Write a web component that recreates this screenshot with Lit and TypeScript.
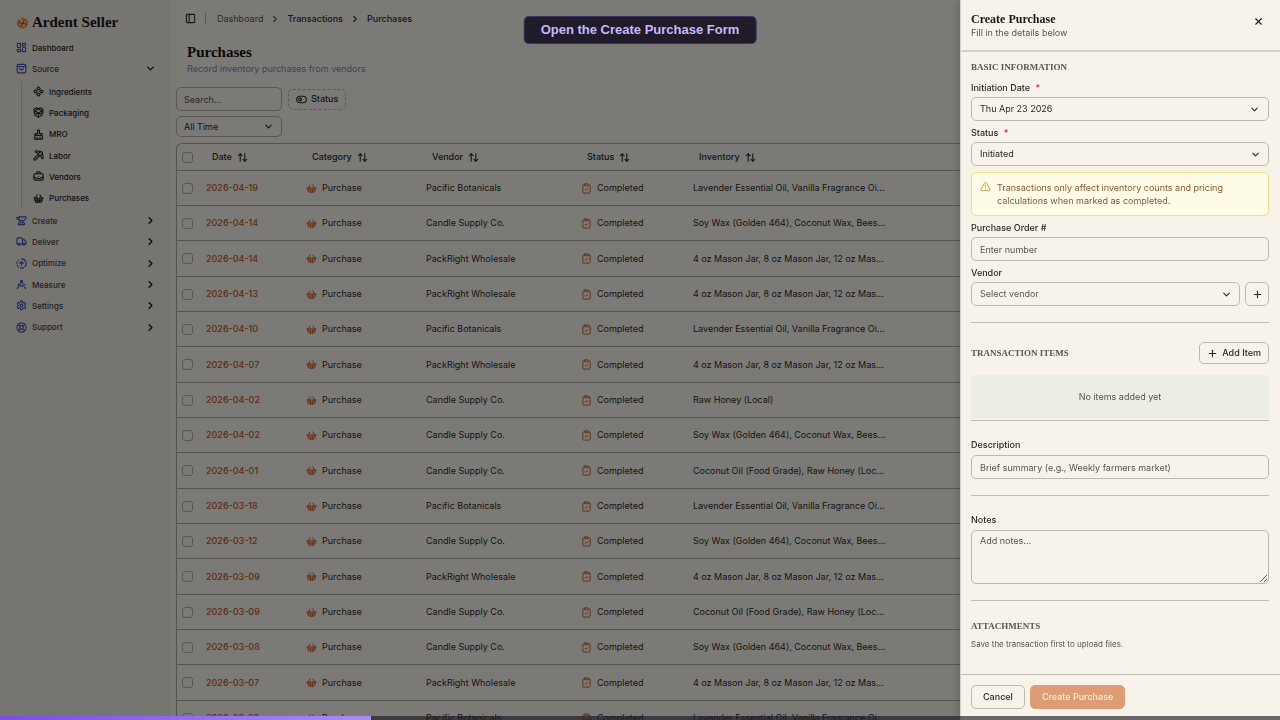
import { LitElement, html, css, svg } from "lit";
import { customElement } from "lit/decorators.js";

const p = (...ds: string[]) => ds.map((d) => svg`<path d=${d}></path>`);

const shapes: Record<string, unknown> = {
  dashboard: svg`<rect x="3" y="3" width="7" height="9" rx="1"/><rect x="14" y="3" width="7" height="5" rx="1"/><rect x="14" y="12" width="7" height="9" rx="1"/><rect x="3" y="16" width="7" height="5" rx="1"/>`,
  bag: svg`<rect x="2.500" y="3" width="19" height="18.500" rx="3"/><path d="M3 7.500h18M16 11a4 4 0 0 1-8 0"/>`,
  component: p(
    "M15.536 11.293a1 1 0 0 0 0 1.414l2.376 2.377a1 1 0 0 0 1.414 0l2.377-2.377a1 1 0 0 0 0-1.414l-2.377-2.377a1 1 0 0 0-1.414 0z",
    "M2.297 11.293a1 1 0 0 0 0 1.414l2.377 2.377a1 1 0 0 0 1.414 0l2.377-2.377a1 1 0 0 0 0-1.414L6.088 8.916a1 1 0 0 0-1.414 0z",
    "M8.916 17.912a1 1 0 0 0 0 1.415l2.377 2.376a1 1 0 0 0 1.414 0l2.377-2.376a1 1 0 0 0 0-1.415l-2.377-2.376a1 1 0 0 0-1.414 0z",
    "M8.916 4.674a1 1 0 0 0 0 1.414l2.377 2.376a1 1 0 0 0 1.414 0l2.377-2.376a1 1 0 0 0 0-1.414l-2.377-2.377a1 1 0 0 0-1.414 0z"
  ),
  box: p(
    "M12 22v-9",
    "M15.170 2.210a1.670 1.670 0 0 1 1.630 0L21 4.570a1.930 1.930 0 0 1 0 3.360L8.820 14.790a1.655 1.655 0 0 1-1.640 0L3 12.430a1.930 1.930 0 0 1 0-3.360z",
    "M20 13v3.870a2.060 2.060 0 0 1-1.110 1.830l-6 3.080a1.930 1.930 0 0 1-1.780 0l-6-3.080A2.060 2.060 0 0 1 4 16.870V13",
    "M21 12.430a1.930 1.930 0 0 0 0-3.360L8.830 2.200a1.640 1.640 0 0 0-1.630 0L3 4.570a1.930 1.930 0 0 0 0 3.360l12.180 6.860a1.636 1.636 0 0 0 1.630 0z"
  ),
  brush: p(
    "m16 22-1-4",
    "M19 14a1 1 0 0 0 1-1v-1a2 2 0 0 0-2-2h-3a1 1 0 0 1-1-1V4a2 2 0 0 0-4 0v5a1 1 0 0 1-1 1H6a2 2 0 0 0-2 2v1a1 1 0 0 0 1 1",
    "M19 14H5l-1.973 6.767A1 1 0 0 0 4 22h16a1 1 0 0 0 .973-1.233z",
    "m8 22 1-4"
  ),
  pickaxe: p(
    "m14 13-8.381 8.380a1 1 0 0 1-3.001-3L11 9.999",
    "M15.973 4.027A13 13 0 0 0 5.902 2.373c-1.398.342-1.092 2.158.277 2.601a19.900 19.900 0 0 1 5.822 3.024",
    "M16.001 11.999a19.900 19.900 0 0 1 3.024 5.824c.444 1.369 2.260 1.676 2.603.278A13 13 0 0 0 20 8.069",
    "M18.352 3.352a1.205 1.205 0 0 0-1.704 0l-5.296 5.296a1.205 1.205 0 0 0 0 1.704l2.296 2.296a1.205 1.205 0 0 0 1.704 0l5.296-5.296a1.205 1.205 0 0 0 0-1.704z"
  ),
  briefcase: svg`<path d="M12 12h.01M16 6V4a2 2 0 0 0-2-2h-4a2 2 0 0 0-2 2v2M22 13a18.150 18.150 0 0 1-20 0"/><rect x="2" y="6" width="20" height="14" rx="2"/>`,
  basket: p(
    "m15 11-1 9", "m19 11-4-7", "M2 11h20",
    "m3.500 11 1.600 7.400a2 2 0 0 0 2 1.600h9.800a2 2 0 0 0 2-1.600l1.700-7.400",
    "M4.500 15.500h15", "m5 11 4-7", "m9 11 1 9"
  ),
  anvil: p(
    "M7 10H6a4 4 0 0 1-4-4 1 1 0 0 1 1-1h4",
    "M7 5a1 1 0 0 1 1-1h13a1 1 0 0 1 1 1 7 7 0 0 1-7 7H8a1 1 0 0 1-1-1z",
    "M9 12v5", "M15 12v5",
    "M5 20a3 3 0 0 1 3-3h8a3 3 0 0 1 3 3 1 1 0 0 1-1 1H6a1 1 0 0 1-1-1"
  ),
  truck: svg`<path d="M14 18V6a2 2 0 0 0-2-2H4a2 2 0 0 0-2 2v11a1 1 0 0 0 1 1h2M15 18H9M19 18h2a1 1 0 0 0 1-1v-3.650a1 1 0 0 0-.220-.624l-3.480-4.350A1 1 0 0 0 17.520 8H14"/><circle cx="17" cy="18" r="2"/><circle cx="7" cy="18" r="2"/>`,
  optimize: p(
    "M12 2a10 10 0 0 1 7.380 16.750", "m16 12-4-4-4 4", "M12 16V8",
    "M2.500 8.875a10 10 0 0 0-.500 3", "M2.830 16a10 10 0 0 0 2.430 3.400",
    "M4.636 5.235a10 10 0 0 1 .891-.857", "M8.644 21.420a10 10 0 0 0 7.631-.380"
  ),
  compass: svg`<circle cx="12" cy="5" r="2"/><path d="m12.990 6.740 1.930 3.440M19.136 12a10 10 0 0 1-14.271 0M21 21l-2.160-3.840M3 21l8.020-14.260"/>`,
  gear: svg`<path d="M9.671 4.136a2.340 2.340 0 0 1 4.659 0 2.340 2.340 0 0 0 3.319 1.915 2.340 2.340 0 0 1 2.330 4.033 2.340 2.340 0 0 0 0 3.831 2.340 2.340 0 0 1-2.330 4.033 2.340 2.340 0 0 0-3.319 1.915 2.340 2.340 0 0 1-4.659 0 2.340 2.340 0 0 0-3.320-1.915 2.340 2.340 0 0 1-2.330-4.033 2.340 2.340 0 0 0 0-3.831A2.340 2.340 0 0 1 6.350 6.051a2.340 2.340 0 0 0 3.319-1.915"/><circle cx="12" cy="12" r="3"/>`,
  buoy: svg`<circle cx="12" cy="12" r="10"/><circle cx="12" cy="12" r="4"/><path d="m4.930 4.930 4.240 4.240M14.830 9.170l4.240-4.240M14.830 14.830l4.240 4.240M9.170 14.830l-4.240 4.240"/>`,
  down: p("m6 9 6 6 6-6"),
  right: p("m9 18 6-6-6-6"),
  panel: svg`<rect x="3" y="3" width="18" height="18" rx="2"/><path d="M9 3v18"/>`,
  pill: svg`<rect x="1.500" y="5" width="21" height="14" rx="7"/><circle cx="9" cy="12" r="3"/>`,
  sort: p("m3 8 4-4 4 4", "M7 4v16", "m13 16 4 4 4-4", "M17 20V4"),
  clipboard: svg`<rect x="8" y="2" width="8" height="4" rx="1"/><path d="M16 4h2a2 2 0 0 1 2 2v14a2 2 0 0 1-2 2H6a2 2 0 0 1-2-2V6a2 2 0 0 1 2-2h2M9 14l2 2 4-4"/>`,
  close: p("M18 6 6 18", "m6 6 12 12"),
  plus: p("M5 12h14", "M12 5v14"),
  warning: p("m21.730 18-8-14a2 2 0 0 0-3.480 0l-8 14A2 2 0 0 0 4 21h16a2 2 0 0 0 1.730-3", "M12 9v4", "M12 17h.01"),
};

const icon = (name: string, kind = "") =>
  html`<svg class="icon ${kind}" viewBox="0 0 24 24" aria-hidden="true">${shapes[name]}</svg>`;

const subItems = [
  ["component", "Ingredients"], ["box", "Packaging"], ["brush", "MRO"],
  ["pickaxe", "Labor"], ["briefcase", "Vendors"], ["basket", "Purchases"],
];
const groups = [
  ["anvil", "Create"], ["truck", "Deliver"], ["optimize", "Optimize"],
  ["compass", "Measure"], ["gear", "Settings"], ["buoy", "Support"],
];

const PB = "Pacific Botanicals";
const CS = "Candle Supply Co.";
const PW = "PackRight Wholesale";
const OILS = "Lavender Essential Oil, Vanilla Fragrance Oi...";
const WAX = "Soy Wax (Golden 464), Coconut Wax, Bees...";
const JARS = "4 oz Mason Jar, 8 oz Mason Jar, 12 oz Mas...";
const FOOD = "Coconut Oil (Food Grade), Raw Honey (Loc...";
const rows = [
  ["2026-04-19", PB, OILS], ["2026-04-14", CS, WAX], ["2026-04-14", PW, JARS],
  ["2026-04-13", PW, JARS], ["2026-04-10", PB, OILS], ["2026-04-07", PW, JARS],
  ["2026-04-02", CS, "Raw Honey (Local)"], ["2026-04-02", CS, WAX], ["2026-04-01", CS, FOOD],
  ["2026-03-18", PB, OILS], ["2026-03-12", CS, WAX], ["2026-03-09", PW, JARS],
  ["2026-03-09", CS, FOOD], ["2026-03-08", CS, WAX], ["2026-03-07", PW, JARS],
  ["2026-02-28", PB, OILS],
];

const base = css`
  *, *::before, *::after { box-sizing: border-box; }
  h1, h2, h3, p, ul, ol { margin: 0; padding: 0; list-style: none; }
  a { color: inherit; text-decoration: none; }
  button, input, select, textarea { font: inherit; color: inherit; margin: 0; background: none; }
  button { border: 0; padding: 0; }
  .icon {
    width: 11px; height: 11px; flex: none; display: block;
    fill: none; stroke: currentColor; stroke-width: 2.4;
    stroke-linecap: round; stroke-linejoin: round;
  }
  .serif { font-family: "Liberation Serif", serif; font-weight: 700; }
`;

@customElement("side-nav")
class SideNav extends LitElement {
  static styles = [base, css`
    :host { display: block; padding: 14px 14px 0 16px; font-size: 8px; color: #48443e; }
    .brand { display: flex; align-items: center; gap: 3px; height: 16px; margin-bottom: 7px; font-size: 15px; color: #1c1814; }
    .flame { width: 13px; height: 13px; }
    .link { display: flex; align-items: center; gap: 5px; width: 100%; height: 21px; text-align: left; font-weight: 500; }
    .current { color: #26221e; }
    .link > .icon:first-child { color: #3c50b4; }
    .link > span { flex: 1; }
    .chevron { color: #1c1814; stroke-width: 3; }
    .sub { display: grid; grid-auto-rows: 1fr; height: 128px; margin: 2px 0 1px 5px; padding-left: 11px; border-left: 1px solid #c9c4ba; color: #26221e; }
    .sub .link, .groups .link { height: 100%; }
    .sub .link > .icon:first-child { color: #26221e; }
    .groups { display: grid; grid-auto-rows: 1fr; height: 128px; }
  `];
  render() {
    return html`
      <div class="brand serif">
        <svg class="flame" viewBox="0 0 24 24" aria-hidden="true">
          <path fill="#f08a48" d="M12 1c2 3 2 4 4 5 1-1 1-2 1-3 4 4 6 8 5 12-1 5-5 8-10 8S3 20 2 15c-1-4 1-7 4-10 0 2 0 3 1 4 2-2 4-4 5-8z"/>
          <path fill="#ffdca0" d="M6 12l6-5 6 4-1 8-8 1z"/>
          <path fill="none" stroke="#c84a20" stroke-width="2" d="M5 10l6 5 4-7M9 19l5-6 5 3"/>
        </svg>
        <span>Ardent Seller</span>
      </div>
      <nav>
        <a class="link current" href="#dashboard">${icon("dashboard")}<span>Dashboard</span></a>
        <button class="link" aria-expanded="true">${icon("bag")}<span>Source</span>${icon("down", "chevron")}</button>
        <ul class="sub">
          ${subItems.map(([i, t]) => html`<li><a class="link" href="#${t}">${icon(i)}<span>${t}</span></a></li>`)}
        </ul>
        <ul class="groups">
          ${groups.map(([i, t]) => html`<li><button class="link">${icon(i)}<span>${t}</span>${icon("right", "chevron")}</button></li>`)}
        </ul>
      </nav>`;
  }
}

@customElement("purchase-list")
class PurchaseList extends LitElement {
  static styles = [base, css`
    :host { display: block; padding: 6px 6px 0; color: #2e2a26; }
    .crumbs { display: flex; align-items: center; gap: 8px; height: 25px; padding-left: 9px; }
    .toggle { padding-right: 9px; border-right: 1px solid #b8b3a9; margin-right: 3px; }
    .crumbs ol { display: flex; align-items: center; gap: 7px; }
    .crumbs li { display: flex; align-items: center; gap: 7px; font-weight: 500; }
    .crumbs li:first-child { color: #5a554e; font-weight: 400; }
    .crumbs li .icon { stroke-width: 2.6; width: 10px; height: 10px; }
    .heading { padding: 12px 11px 10px; }
    h1 { font-size: 15px; line-height: 18px; color: #14100c; }
    .heading p { line-height: 16px; color: #7486bc; }
    .filters { display: grid; grid-template-columns: 106px max-content; gap: 5px; align-items: center; margin-bottom: 6px; }
    .search, .range select { width: 100%; border: 1px solid #b4afa5; border-radius: 5px; padding: 0 7px; }
    .search { height: 24px; outline: 0; }
    .search::placeholder { color: #5a554e; opacity: 1; }
    .range { display: grid; align-items: center; }
    .range > * { grid-area: 1 / 1; }
    .range select { height: 21px; appearance: none; }
    .range .icon { justify-self: end; margin-right: 8px; pointer-events: none; }
    .status { display: flex; align-items: center; gap: 4px; height: 21px; margin-left: 1px; padding: 0 7px; border: 1px dashed #bcb7ad; border-radius: 5px; font-weight: 500; }
    .frame { border: 1px solid #aaa59b; border-bottom: 0; border-radius: 6px 6px 0 0; }
    table { width: 100%; table-layout: fixed; border-collapse: separate; border-spacing: 0; }
    th, td { padding: 0 6px; text-align: left; border-bottom: 1px solid #aaa59b; white-space: nowrap; overflow: hidden; }
    th { height: 27px; font-weight: 500; }
    td { height: 35px; }
    tbody tr:nth-child(3n) td { height: 36px; }
    .pick { width: 23px; padding: 0 5px; }
    .date { width: 100px; }
    .category { width: 120px; }
    .vendor { width: 155px; }
    .state { width: 112px; }
    .sort { display: flex; align-items: center; gap: 5px; padding-left: 6px; }
    td a { color: #c05420; font-weight: 500; }
    .cell { display: flex; align-items: center; gap: 5px; }
    .cell .icon { color: #c05420; stroke-width: 2; }
    .tick { appearance: none; display: block; width: 11px; height: 11px; border: 1px solid #b4afa5; border-radius: 3px; }
  `];
  render() {
    const head = (cls: string, t: string) =>
      html`<th class=${cls}><button class="sort">${t}${icon("sort")}</button></th>`;
    return html`
      <nav class="crumbs" aria-label="Breadcrumb">
        <button class="toggle" aria-label="Toggle sidebar">${icon("panel")}</button>
        <ol>
          <li><a href="#dashboard">Dashboard</a>${icon("right")}</li>
          <li><a href="#transactions">Transactions</a>${icon("right")}</li>
          <li>Purchases</li>
        </ol>
      </nav>
      <header class="heading">
        <h1 class="serif">Purchases</h1>
        <p>Record inventory purchases from vendors</p>
      </header>
      <div class="filters">
        <input class="search" type="search" placeholder="Search..." aria-label="Search" />
        <button class="status">${icon("pill")}Status</button>
        <div class="range">
          <select aria-label="Time range"><option>All Time</option></select>${icon("down")}
        </div>
      </div>
      <div class="frame">
        <table>
          <thead>
            <tr>
              <th class="pick"><input class="tick" type="checkbox" aria-label="Select all" /></th>
              ${head("date", "Date")}${head("category", "Category")}${head("vendor", "Vendor")}
              ${head("state", "Status")}${head("", "Inventory")}
            </tr>
          </thead>
          <tbody>
            ${rows.map(([date, vendor, items]) => html`<tr>
              <td class="pick"><input class="tick" type="checkbox" aria-label="Select ${date}" /></td>
              <td><a href="#${date}">${date}</a></td>
              <td><span class="cell">${icon("basket")}Purchase</span></td>
              <td>${vendor}</td>
              <td><span class="cell">${icon("clipboard")}Completed</span></td>
              <td>${items}</td>
            </tr>`)}
          </tbody>
        </table>
      </div>`;
  }
}

@customElement("purchase-form")
class PurchaseForm extends LitElement {
  static styles = [base, css`
    :host { display: flex; flex-direction: column; background: #f7f2ea; color: #2c2824; border-left: 1px solid #d5d1c8; }
    header { display: flex; justify-content: space-between; align-items: flex-start; padding: 12px 16px 10px 10px; border-bottom: 2px solid #d5d1c8; }
    h2 { font-size: 12px; line-height: 14px; color: #1c1814; }
    header p { line-height: 14px; color: #5a554e; }
    .close { padding-top: 4px; color: #1c1814; }
    .body { flex: 1; min-height: 0; overflow: hidden; padding: 9px 11px 0 10px; }
    h3 { font-size: 9px; line-height: 12px; text-transform: uppercase; color: #5a554e; }
    .fields { display: grid; gap: 6px; margin-top: 9px; }
    .field { display: grid; gap: 3px; }
    .single { gap: 4px; }
    label { line-height: 12px; font-weight: 500; }
    .required { color: #d0223c; margin-left: 3px; }
    .control { display: flex; align-items: center; justify-content: space-between; width: 100%; height: 24px; padding: 0 8px; border: 1px solid #bdb8ae; border-radius: 5px; outline: 0; text-align: left; appearance: none; }
    .control::placeholder { color: #5a554e; opacity: 1; }
    .pick { display: grid; align-items: center; flex: 1; }
    .pick > * { grid-area: 1 / 1; }
    .pick > .icon { justify-self: end; margin-right: 8px; pointer-events: none; }
    .muted { color: #5a554e; }
    .with-add { display: flex; gap: 5px; }
    .add { display: grid; place-items: center; width: 24px; height: 24px; border: 1px solid #bdb8ae; border-radius: 5px; }
    .note { display: flex; gap: 6px; padding: 8px; border: 1px solid #ece08c; border-radius: 5px; background: #fefbe6; color: #85592f; line-height: 13px; }
    .note .icon { color: #c69a2c; stroke-width: 2; }
    hr { margin: 16px 0 18px; border: 0; border-top: 1px solid #c2bdb3; }
    .bar { display: flex; justify-content: space-between; align-items: center; padding-top: 1px; }
    .add-item { display: flex; align-items: center; gap: 4px; height: 22px; padding: 0 7px; border: 1px solid #bdb8ae; border-radius: 5px; font-weight: 500; }
    .empty { margin-top: 11px; padding: 15px 0; line-height: 14px; text-align: center; background: #eceee4; color: #5a554e; border-radius: 4px; }
    .empty + hr { margin-top: 1px; }
    textarea.control { display: block; height: 54px; padding: 4px 8px; line-height: 12px; resize: vertical; }
    .hint { margin-top: 6px; font-size: 8px; line-height: 12px; color: #5a554e; }
    .files { padding-top: 1px; }
    footer { display: flex; gap: 5px; padding: 10px 10px 11px; border-top: 1px solid #c2bdb3; }
    .action { height: 24px; padding: 0 11px; border: 1px solid #bdb8ae; border-radius: 5px; font-weight: 500; }
    .primary { border-color: #dd9c74; background: #dd9c74; color: #f9ebdf; }
  `];
  render() {
    return html`
      <header>
        <div>
          <h2 class="serif">Create Purchase</h2>
          <p>Fill in the details below</p>
        </div>
        <button class="close" aria-label="Close">${icon("close")}</button>
      </header>
      <div class="body">
        <section>
          <h3 class="serif">Basic Information</h3>
          <div class="fields">
            <div class="field">
              <label for="date">Initiation Date <span class="required">*</span></label>
              <button id="date" class="control">Thu Apr 23 2026${icon("down")}</button>
            </div>
            <div class="field">
              <label for="status">Status <span class="required">*</span></label>
              <div class="pick"><select id="status" class="control"><option>Initiated</option></select>${icon("down")}</div>
            </div>
            <p class="note">${icon("warning")}<span>Transactions only affect inventory counts and pricing calculations when marked as completed.</span></p>
            <div class="field">
              <label for="order">Purchase Order #</label>
              <input id="order" class="control" placeholder="Enter number" />
            </div>
            <div class="field">
              <label for="vendor">Vendor</label>
              <div class="with-add">
                <div class="pick"><select id="vendor" class="control muted"><option>Select vendor</option></select>${icon("down")}</div>
                <button class="add" aria-label="Add vendor">${icon("plus")}</button>
              </div>
            </div>
          </div>
        </section>
        <hr />
        <section>
          <div class="bar">
            <h3 class="serif">Transaction Items</h3>
            <button class="add-item">${icon("plus")}Add Item</button>
          </div>
          <p class="empty">No items added yet</p>
          <hr />
        </section>
        <div class="field single">
          <label for="description">Description</label>
          <input id="description" class="control" placeholder="Brief summary (e.g., Weekly farmers market)" />
        </div>
        <hr />
        <div class="field single">
          <label for="notes">Notes</label>
          <textarea id="notes" class="control" placeholder="Add notes..."></textarea>
        </div>
        <hr />
        <section class="files">
          <h3 class="serif">Attachments</h3>
          <p class="hint">Save the transaction first to upload files.</p>
        </section>
      </div>
      <footer>
        <button class="action">Cancel</button>
        <button class="action primary" disabled>Create Purchase</button>
      </footer>`;
  }
}

@customElement("app-root")
class AppRoot extends LitElement {
  progress = 29;
  static styles = [base, css`
    :host { display: block; height: 100vh; overflow: hidden; font: 400 9px/14px Inter, sans-serif; background: #edeae2; }
    .shell { display: grid; grid-template-columns: 170px minmax(0, 1fr); height: 100%; }
    .content { overflow: hidden; background: #f7f4ee; }
    .scrim { position: fixed; inset: 0; background: rgba(0, 0, 0, 0.5); }
    .drawer { position: fixed; top: 0; right: 0; bottom: 0; width: 320px; box-shadow: -2px 0 8px rgba(0, 0, 0, 0.16); }
    .caption { position: fixed; top: 16px; left: 50%; transform: translateX(-50%); padding: 5px 16px; border: 1px solid #3d3360; border-radius: 5px; background: #1f1b29; color: #c9b8fb; font: 700 13px/16px "Liberation Sans", Arial, sans-serif; white-space: nowrap; }
    .track { position: fixed; left: 0; right: 0; bottom: 0; height: 4px; background: rgba(30, 24, 36, 0.65); }
    .fill { height: 100%; background: linear-gradient(90deg, #7c4de8, #a78bfa); }
  `];
  render() {
    return html`
      <div class="shell">
        <side-nav></side-nav>
        <main class="content"><purchase-list></purchase-list></main>
      </div>
      <div class="scrim"></div>
      <purchase-form class="drawer" role="dialog" aria-label="Create Purchase"></purchase-form>
      <div class="caption" role="status">Open the Create Purchase Form</div>
      <div class="track"><div class="fill" style="width:${this.progress}%"></div></div>`;
  }
}
